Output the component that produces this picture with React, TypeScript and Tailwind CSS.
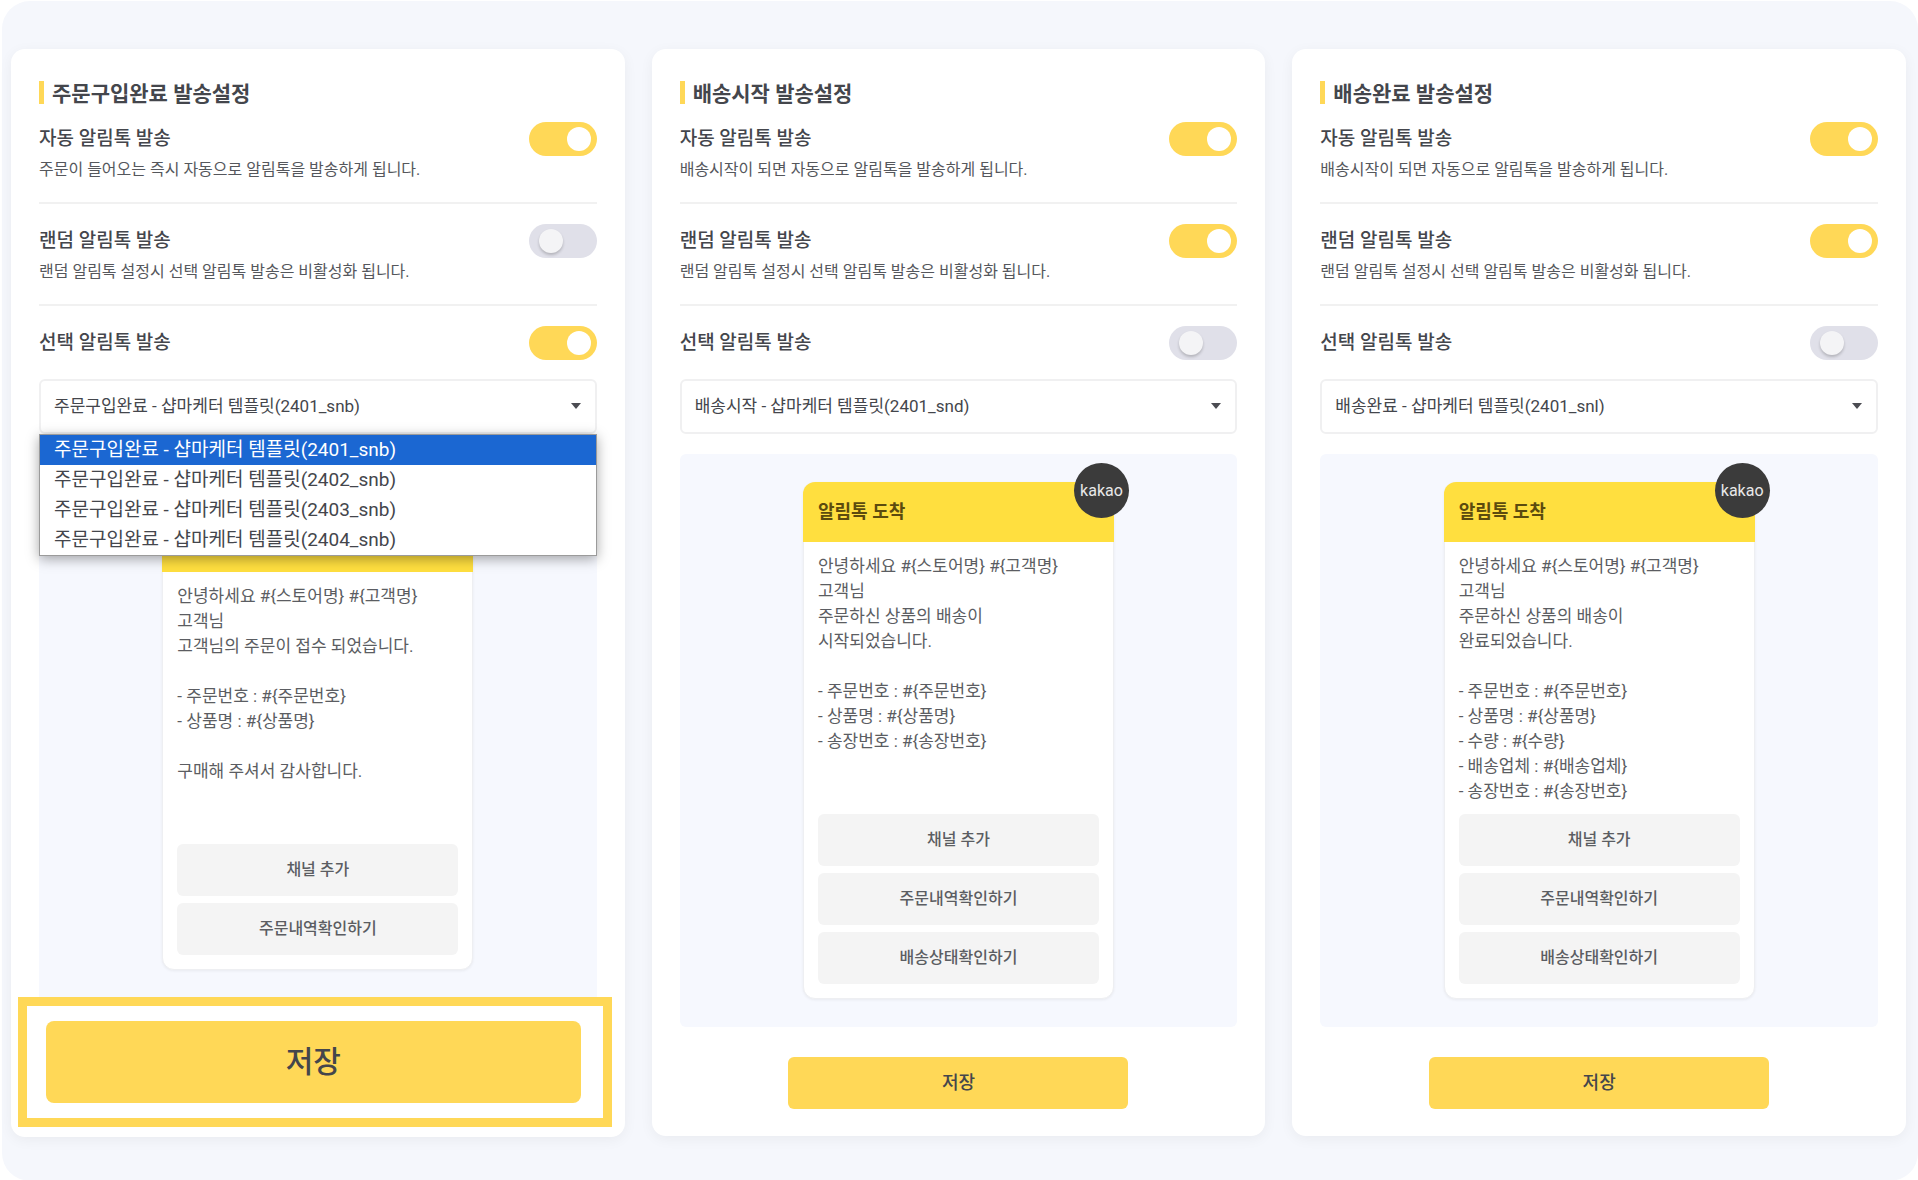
import { useState } from "react";

type Channel = {
  id: string;
  title: string;
  autoDescription: string;
  auto: boolean;
  random: boolean;
  select: boolean;
  templates: string[];
  open?: boolean;
  message: string;
  actions: string[];
};

const RANDOM_DESCRIPTION = "랜덤 알림톡 설정시 선택 알림톡 발송은 비활성화 됩니다.";

const CHANNELS: Channel[] = [
  {
    id: "order",
    title: "주문구입완료 발송설정",
    autoDescription: "주문이 들어오는 즉시 자동으로 알림톡을 발송하게 됩니다.",
    auto: true,
    random: false,
    select: true,
    open: true,
    templates: [
      "주문구입완료 - 샵마케터 템플릿(2401_snb)",
      "주문구입완료 - 샵마케터 템플릿(2402_snb)",
      "주문구입완료 - 샵마케터 템플릿(2403_snb)",
      "주문구입완료 - 샵마케터 템플릿(2404_snb)",
    ],
    message: `안녕하세요 #{스토어명} #{고객명}
고객님
고객님의 주문이 접수 되었습니다.

- 주문번호 : #{주문번호}
- 상품명 : #{상품명}

구매해 주셔서 감사합니다.`,
    actions: ["채널 추가", "주문내역확인하기"],
  },
  {
    id: "shipping",
    title: "배송시작 발송설정",
    autoDescription: "배송시작이 되면 자동으로 알림톡을 발송하게 됩니다.",
    auto: true,
    random: true,
    select: false,
    templates: ["배송시작 - 샵마케터 템플릿(2401_snd)"],
    message: `안녕하세요 #{스토어명} #{고객명}
고객님
주문하신 상품의 배송이
시작되었습니다.

- 주문번호 : #{주문번호}
- 상품명 : #{상품명}
- 송장번호 : #{송장번호}`,
    actions: ["채널 추가", "주문내역확인하기", "배송상태확인하기"],
  },
  {
    id: "delivered",
    title: "배송완료 발송설정",
    autoDescription: "배송시작이 되면 자동으로 알림톡을 발송하게 됩니다.",
    auto: true,
    random: true,
    select: false,
    templates: ["배송완료 - 샵마케터 템플릿(2401_snl)"],
    message: `안녕하세요 #{스토어명} #{고객명}
고객님
주문하신 상품의 배송이
완료되었습니다.

- 주문번호 : #{주문번호}
- 상품명 : #{상품명}
- 수량 : #{수량}
- 배송업체 : #{배송업체}
- 송장번호 : #{송장번호}`,
    actions: ["채널 추가", "주문내역확인하기", "배송상태확인하기"],
  },
];

function SettingRow({
  id,
  label,
  description,
  initial,
}: {
  id: string;
  label: string;
  description?: string;
  initial: boolean;
}) {
  const [on, setOn] = useState(initial);
  return (
    <div className="flex items-start justify-between gap-4">
      <div>
        <label htmlFor={id} className="block text-[19px] leading-[34px] font-medium">
          {label}
        </label>
        {description && <p className="text-base leading-7 text-[#55575c]">{description}</p>}
      </div>
      <input
        id={id}
        type="checkbox"
        role="switch"
        checked={on}
        onChange={(e) => setOn(e.target.checked)}
        className="flex h-[34px] w-[68px] shrink-0 cursor-pointer appearance-none items-center rounded-full bg-[#e0e0e9] px-[10px] before:size-6 before:rounded-full before:bg-[#f4f4f6] before:shadow-[0_2px_3px_rgba(0,0,0,0.2)] checked:justify-end checked:bg-[#ffd857] checked:px-[6px] checked:before:bg-white checked:before:shadow-none"
      />
    </div>
  );
}

function TemplateSelect({ channel }: { channel: Channel }) {
  const [value, setValue] = useState(channel.templates[0]);
  return (
    <div className="relative mt-[19px]">
      <select
        aria-label={channel.title}
        value={value}
        onChange={(e) => setValue(e.target.value)}
        className="block h-[55px] w-full appearance-none rounded-md border-2 border-[#f0f0f1] bg-white px-[13px] text-[17px]"
      >
        {channel.templates.map((t) => (
          <option key={t}>{t}</option>
        ))}
      </select>
      <svg viewBox="0 0 10 6" className="pointer-events-none absolute top-6 right-4 h-[6px] w-[10px]" aria-hidden="true">
        <path d="M0 0h10L5 6z" fill="#4b4c52" />
      </svg>
      {channel.open && (
        <ul
          role="listbox"
          aria-label={channel.title}
          className="absolute inset-x-0 top-full z-10 border border-[#9b9b9b] bg-white text-[19px] leading-[30px] shadow-[0_3px_12px_rgba(0,0,0,0.35)]"
        >
          {channel.templates.map((t) => (
            <li
              key={t}
              role="option"
              aria-selected={t === value}
              onClick={() => setValue(t)}
              className="cursor-default px-[14px] whitespace-nowrap aria-selected:bg-[#1b67d2] aria-selected:text-white"
            >
              {t}
            </li>
          ))}
        </ul>
      )}
    </div>
  );
}

function MessagePreview({ channel }: { channel: Channel }) {
  return (
    <div className="relative w-[311px] rounded-xl border border-[#eeeff2] bg-white shadow-[0_1px_3px_rgba(0,0,0,0.06)]">
      <div className="-mx-px -mt-px h-[60px] rounded-tl-xl bg-[#ffdf3f] px-[15px]">
        {!channel.open && (
          <h3 className="text-lg leading-[60px] font-bold text-[#5c4b0e]">알림톡 도착</h3>
        )}
      </div>
      {!channel.open && (
        <span className="absolute -top-5 -right-4 flex size-[55px] items-center justify-center rounded-full bg-[#3b3b3b] text-base text-[#e8e8e8]">
          kakao
        </span>
      )}
      <div className="px-[14px] pb-[14px]">
        <p className="min-h-[272px] pt-3 text-[17px] leading-[25px] whitespace-pre-line text-[#5b5d62]">
          {channel.message}
        </p>
        <div className="flex flex-col gap-[7px]">
          {channel.actions.map((a) => (
            <button key={a} type="button" className="h-[52px] rounded-md bg-[#f4f4f4] text-base font-medium text-[#5b5d62]">
              {a}
            </button>
          ))}
        </div>
      </div>
    </div>
  );
}

function ChannelCard({ channel }: { channel: Channel }) {
  return (
    <section className="flex flex-col rounded-[14px] bg-white shadow-[0_3px_14px_rgba(0,0,0,0.05)]">
      <div className="px-7 pt-[31px]">
        <h2 className="flex items-start gap-2 text-[21px] leading-7 font-bold">
          <span className="mt-px h-[23px] w-[5px] bg-[#ffd857]" />
          {channel.title}
        </h2>
        <div className="border-b-2 border-[#f1f1f1] pt-[14px] pb-[18px]">
          <SettingRow
            id={`${channel.id}-auto`}
            label="자동 알림톡 발송"
            description={channel.autoDescription}
            initial={channel.auto}
          />
        </div>
        <div className="border-b-2 border-[#f1f1f1] pt-5 pb-[18px]">
          <SettingRow
            id={`${channel.id}-random`}
            label="랜덤 알림톡 발송"
            description={RANDOM_DESCRIPTION}
            initial={channel.random}
          />
        </div>
        <div className="pt-5">
          <SettingRow id={`${channel.id}-select`} label="선택 알림톡 발송" initial={channel.select} />
        </div>
        <TemplateSelect channel={channel} />
        <div
          className={
            channel.open
              ? "mt-5 flex justify-center rounded-t-md bg-[#f6f8fe] pt-[58px] pb-[27px]"
              : "mt-5 flex justify-center rounded-md bg-[#f6f8fe] py-7"
          }
        >
          <MessagePreview channel={channel} />
        </div>
      </div>
      {channel.open ? (
        <div className="mr-[13px] mb-[10px] ml-[7px] border-[9px] border-[#ffd857] py-[15px] pr-[22px] pl-[19px]">
          <button type="button" className="block h-[82px] w-full rounded-lg bg-[#ffd857] text-3xl font-medium text-[#44464c]">
            저장
          </button>
        </div>
      ) : (
        <div className="flex justify-center pt-[30px] pb-[27px]">
          <button type="button" className="h-[52px] w-[340px] rounded-md bg-[#ffd857] text-lg font-medium text-[#44464c]">
            저장
          </button>
        </div>
      )}
    </section>
  );
}

export default function App() {
  return (
    <div className="flex min-h-screen bg-white pt-px pl-[2px] font-[Roboto,'Noto_Sans_CJK_KR',sans-serif] text-[#44464c]">
      <main className="grid flex-1 grid-cols-3 items-start gap-[27px] rounded-[28px] bg-[#f5f7fc] pt-12 pr-3 pb-11 pl-[9px]">
        {CHANNELS.map((c) => (
          <ChannelCard key={c.id} channel={c} />
        ))}
      </main>
    </div>
  );
}
